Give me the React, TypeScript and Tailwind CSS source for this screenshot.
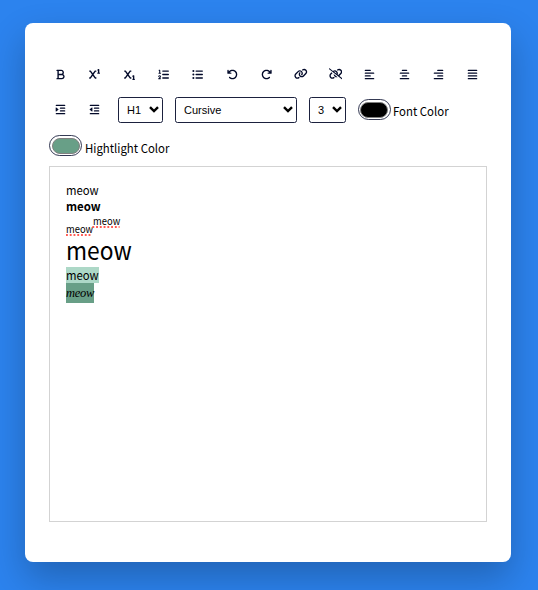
import type { ReactNode } from "react";
import {
  FaBold, FaSuperscript, FaSubscript, FaListOl, FaListUl, FaArrowRotateLeft, FaArrowRotateRight,
  FaLink, FaLinkSlash, FaAlignLeft, FaAlignCenter, FaAlignRight, FaAlignJustify, FaIndent, FaOutdent,
} from "react-icons/fa6";

const tools = [
  FaBold, FaSuperscript, FaSubscript, FaListOl, FaListUl, FaArrowRotateLeft, FaArrowRotateRight,
  FaLink, FaLinkSlash, FaAlignLeft, FaAlignCenter, FaAlignRight, FaAlignJustify,
];

function Tool({ children, wide = false }: { children: ReactNode; wide?: boolean }) {
  return (
    <button className={`flex h-[22px] w-[21.6px] shrink-0 items-center justify-center text-[#020929] ${wide ? "text-[13.6px]" : "text-[11px]"}`}>
      {children}
    </button>
  );
}

function Select({ label, className }: { label: string; className: string }) {
  return (
    <button className={`flex h-[26px] shrink-0 items-center justify-between rounded-[2.5px] border border-[#020929]/90 pl-[8px] pr-[3px] font-['Liberation_Sans',sans-serif] text-[11px] text-black ${className}`}>
      <span className="mt-[1px]">{label}</span>
      <svg viewBox="0 0 10 7" className="h-[7px] w-[10px]" fill="none" stroke="black" strokeWidth="2.4">
        <path d="M1 1.2 5 5.1 9 1.2" />
      </svg>
    </button>
  );
}

function ColorInput({ label, fill, textTop }: { label: string; fill: string; textTop: string }) {
  return (
    <label className="flex items-start">
      <span className="flex h-[21px] w-[33px] items-center justify-center rounded-full border border-[#020929]/80">
        <span className={`h-[16px] w-[28px] rounded-full border border-[#808080] ${fill}`} />
      </span>
      <span className={`ml-[2.5px] origin-left scale-x-[0.935] whitespace-nowrap text-[12.2px] leading-[16px] ${textTop}`}>{label}</span>
    </label>
  );
}

export default function App() {
  return (
    <div className="h-[590px] w-[538px] overflow-hidden bg-[#2c83ee] px-[25px] pt-[22.5px] font-['Noto_Sans_CJK_JP',sans-serif] text-black">
      <div className="h-[539px] w-[486px] rounded-[8px] bg-white px-[24px] pt-[40.5px] shadow-[0_16px_36px_rgba(0,0,0,0.24)]">
        <div className="ml-[0.5px] flex gap-[12.8px]">
          {tools.map((Icon, i) => <Tool key={i} wide={i === 7 || i === 8}><Icon /></Tool>)}
        </div>
        <div className="mt-[11.5px] flex h-[26px] items-center">
          <div className="ml-[0.5px] flex gap-[12.8px]">
            <Tool><FaIndent /></Tool>
            <Tool><FaOutdent /></Tool>
          </div>
          <Select label="H1" className="ml-[12.5px] w-[45px]" />
          <Select label="Cursive" className="ml-[12px] w-[122px]" />
          <Select label="3" className="ml-[12px] w-[37px]" />
          <div className="ml-[12px]"><ColorInput label="Font Color" fill="bg-black" textTop="mt-[4px]" /></div>
        </div>
        <div className="mt-[12.5px] flex h-[21px]"><ColorInput label="Hightlight Color" fill="bg-[#689f87]" textTop="mt-[5px]" /></div>
        <div className="mt-[9.5px] h-[356px] border border-[#d3d3d3] px-[16px] pt-[15px] text-[12.2px] leading-[16px]">
          <div className="origin-left scale-x-[0.93]">meow</div>
          <div className="origin-left scale-x-[0.94] font-bold">meow</div>
          <div className="flex h-[21px] origin-left scale-x-[0.94] text-[10px] leading-[12px]">
            <span className="mt-[9px] h-[12px] underline decoration-[#ff5b52] decoration-dotted decoration-[1.5px] underline-offset-[2px]">meow</span>
            <span className="mt-[1px] h-[12px] underline decoration-[#ff5b52] decoration-dotted decoration-[1.5px] underline-offset-[2px]">meow</span>
          </div>
          <div className="h-[32.5px] origin-left scale-x-[0.93] text-[24.5px] leading-[30px]">meow</div>
          <div className="flex"><span className="w-[33px] bg-[#add8c7]"><span className="inline-block origin-left scale-x-[0.93]">meow</span></span></div>
          <div className="flex"><span className="h-[20px] w-[28px] bg-[#689f87] font-['Liberation_Serif',serif] text-[12.5px] italic leading-[21px] tracking-[-0.25px]">meow</span></div>
        </div>
      </div>
    </div>
  );
}
